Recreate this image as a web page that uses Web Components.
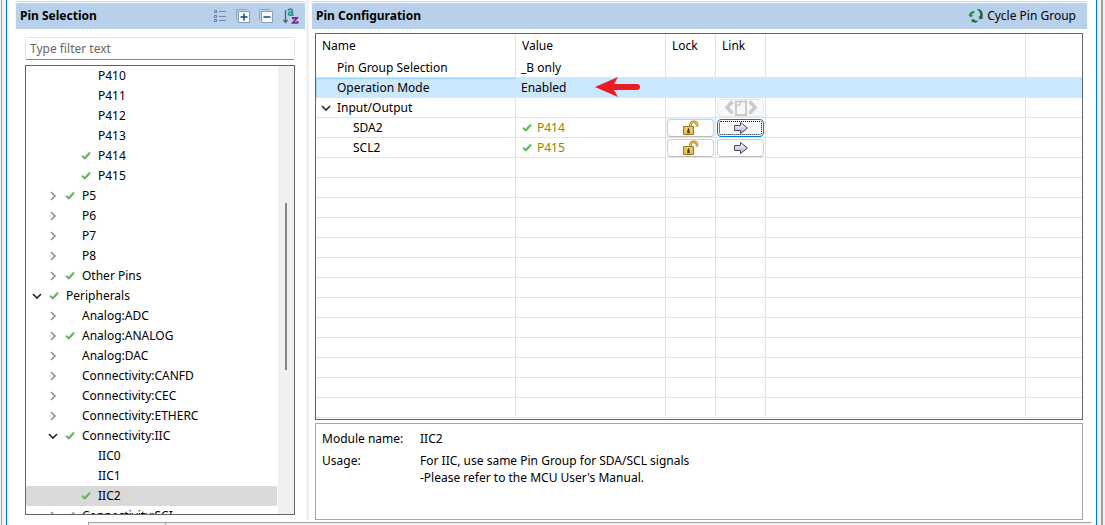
<!DOCTYPE html>
<html lang="en">
<head>
<meta charset="utf-8">
<title>Pin Configuration</title>
<style>
  html, body { height: 100%; margin: 0; }
  body {
    font: 12px/20px "Noto Sans", "Open Sans", sans-serif;
    color: #000;
    background: #f0f0f0;
    --section: #b9d0ea;
    --grid: #e3e3e3;
  }
</style>
</head>
<body>
<app-frame>
  <section-pane slot="left" heading="Pin Selection">
    <tool-bar slot="tools"></tool-bar>
    <pin-tree></pin-tree>
  </section-pane>
  <section-pane slot="right" heading="Pin Configuration">
    <cycle-button slot="tools"></cycle-button>
    <config-view></config-view>
  </section-pane>
</app-frame>

<script>
const ICONS = {
  tick: `<svg width="12" height="12" viewBox="0 0 12 12"><path d="M1.5 6.3 2.800 5.300 4.600 6.800 9.200 2 10.500 2.900 5 9.300Z" fill="#6cbb68" stroke="#8ccb87" stroke-width=".6"/><path d="M2.200 6.900 4.900 9 10.300 3.300" fill="none" stroke="#4b9f4d" stroke-width=".8"/></svg>`,
  closed: `<svg width="10" height="10" viewBox="0 0 10 10"><path d="M3 1 7 5 3 9" fill="none" stroke="#8b8b8b" stroke-width="1.5"/></svg>`,
  open: `<svg width="10" height="10" viewBox="0 0 10 10"><path d="M1 3 5 7 9 3" fill="none" stroke="#2b2b2b" stroke-width="1.7"/></svg>`,
  list: `<svg width="14" height="14" viewBox="0 0 14 14"><g fill="#d7e4f4" stroke="#5a78ad"><path d="M1.5 1.5h2v2h-2zM1.5 6.5h2v2h-2zM1.5 10.5h2v2h-2z"/></g><path d="M6 2.5h7M6 7.5h7M6 11.5h7" stroke="#6f88b2"/></svg>`,
  plus: `<svg width="14" height="14" viewBox="0 0 14 14"><path d="M.5 11V.5H11" fill="none" stroke="#8aa7c7"/><path d="M2.5 2.5h11v11h-11z" fill="#f6faff" stroke="#8aa0b8"/><path d="M4.500 8h7M8 4.500v7" stroke="#174a80" stroke-width="1.500"/></svg>`,
  minus: `<svg width="14" height="14" viewBox="0 0 14 14"><path d="M.5 11V.5H11" fill="none" stroke="#8aa7c7"/><path d="M2.5 2.5h11v11h-11z" fill="#f6faff" stroke="#8aa0b8"/><path d="M4.500 8h7" stroke="#174a80" stroke-width="1.500"/></svg>`,
  sort: `<svg width="17" height="18" viewBox="0 0 17 18"><path d="M3.500 3v12M1.500 13 3.500 15.500 5.500 13" fill="none" stroke="#56606e" stroke-width="1.300"/><path d="M6.200 3.600Q6.700 2.200 8.300 2.200 10.300 2.200 10.300 4V8H12M10.300 5Q6.500 4.800 6.500 6.800 6.700 8.200 8.200 8.100 9.800 8 10.300 6.800" fill="none" stroke="#2c8f83" stroke-width="1.700"/><path d="M10.800 12.300V10.800H15L10.800 15.800H15.500V14" fill="none" stroke="#8a1f91" stroke-width="1.800"/></svg>`,
  cycle: `<svg width="16" height="16" viewBox="0 0 16 16"><path d="M1 7C1.500 4 4 2.500 7 3.500L5.600 5.500C4.500 5.300 3.700 6 3.600 7L5.400 7 2.800 9.500.3 7Z" fill="#2d8b3b"/><path d="M9 1.300 10.500 1C14.300 2.200 15.700 6 14.300 9.300L15.600 10 11.500 11.500 10.500 7.900 12 8.400C12.900 5.500 11.500 3 9 1.300Z" fill="#176b2b"/><path d="M10 12.500C9 14.800 6.500 15.300 4.800 13.600L3.900 14.800 3.600 11.500 7 11.200 6.300 12.200C7.500 13.200 8.600 12.700 10 12.500Z" fill="#105c22"/></svg>`,
  lock: `<svg width="16" height="16" viewBox="0 0 16 16"><path d="M7.500 8V4.500A3.300 3.300 0 0 1 14 4.500V6.500" fill="none" stroke="#a47a16" stroke-width="2.600"/><path d="M7.500 8V4.500A3.300 3.300 0 0 1 14 4.500V6" fill="none" stroke="#f1cf65" stroke-width="1.100"/><path d="M.5 6.500h10v8h-10z" fill="#ddb547" stroke="#a67c18"/><path d="M1.500 8h8M1.500 10h8M1.500 12h8" stroke="#f7df8d"/><path d="M5 8.500h1v2h.5v2.500H4.500v-2.500H5z" fill="#4d3a0c" stroke="#4d3a0c" stroke-width=".4"/></svg>`,
  arrow: `<svg width="16" height="16" viewBox="0 0 16 16"><defs><linearGradient id="g" x2="0" y2="1"><stop stop-color="#fff"/><stop offset="1" stop-color="#a9abda"/></linearGradient></defs><path d="M1.500 5.500H7.500V2.500L14.500 8 7.500 13.500V10.500H1.500Z" fill="url(#g)" stroke="#4b4b60"/></svg>`,
  group: `<svg width="34" height="16" viewBox="0 0 34 16"><g fill="none" stroke="#cbcbcb"><path d="M8.500 1.500 3 7.500 8.500 13.500M25.500 1.500 31 7.500 25.500 13.500" stroke-width="3.500"/><path d="M12 1.500h10v13.500h-10z" stroke-width="2"/><path d="M13 5h3V2" stroke-width="1.500"/></g></svg>`,
  pointer: `<svg width="46" height="22" viewBox="0 0 46 22"><path d="M0 11 23 1 19 8H42Q45 8 45 11T42 14H19L23 21Z" fill="#ed1c24"/></svg>`
};
const RESET = `*{box-sizing:border-box}svg{display:block}button{font:inherit;color:inherit;margin:0;padding:0;border:0;background:none}`;

function define(name, css, html) {
  customElements.define(name, class extends HTMLElement {
    constructor() {
      super();
      this.attachShadow({ mode: 'open' });
      const t = document.createElement('template');
      t.innerHTML = `<style>${RESET}${css}</style>` + (typeof html === 'function' ? html(this) : html);
      this.shadowRoot.append(t.content);
    }
  });
}

define('ui-icon', `:host{display:inline-flex;align-items:center;justify-content:center;flex:none}`,
  el => ICONS[el.getAttribute('name')] || '');

define('app-frame', `
  :host{display:flex;height:100vh;padding:0 2px 0 1px}
  .window{flex:1;min-width:0;display:flex;flex-direction:column;background:#fff;border:solid #0078d7;border-width:0 1px}
  .edge{flex:none;width:5px;border-left:1px solid #a0a0a0;background:#f0f0f0}
  .edge.far{width:6px;border-left:0;border-right:2px solid #a0a0a0}
  .panes{flex:1;min-height:0;display:grid;grid-template-columns:299px 3px minmax(0,1fr)}
  .left{padding:2px 0 0 8px;min-height:0;display:grid}
  .right{padding:2px 8px 0 2px;min-height:0;display:grid}
  .sash{background:#f0f0f0}
  .tabs{display:flex;height:3px;margin:2px 5px 0 81px;border:solid #a0a0a0;border-width:1px 0 0 1px;background:#f0f0f0}
  .tab{width:77px;border-right:1px solid #a0a0a0}`,
  `<div class="edge"></div>
   <div class="window">
     <main class="panes"><div class="left"><slot name="left"></slot></div><div class="sash"></div><div class="right"><slot name="right"></slot></div></main>
     <div class="tabs"><div class="tab"></div></div>
   </div>
   <div class="edge far"></div>`);

define('section-pane', `
  :host{display:flex;flex-direction:column;min-width:0;min-height:0}
  header{display:flex;align-items:center;justify-content:space-between;height:27px;padding:0 5px 1px 4px;
    background:var(--section);border:1px solid #f5f9fd;border-bottom:0;border-radius:3px 3px 0 0;box-shadow:0 -1px 0 #c5daef}
  h2{margin:0;font-size:12px;line-height:20px;font-weight:700}
  .body{flex:1;min-height:0;display:grid}`,
  el => `<header><h2>${el.getAttribute('heading')}</h2><slot name="tools"></slot></header><div class="body"><slot></slot></div>`);

define('tool-bar', `
  :host{display:flex;gap:9px;align-items:center;padding-right:1px}
  button{display:grid;place-items:center;height:18px}`,
  `<button aria-label="Show as list"><ui-icon name="list"></ui-icon></button>
   <button aria-label="Expand all"><ui-icon name="plus"></ui-icon></button>
   <button aria-label="Collapse all"><ui-icon name="minus"></ui-icon></button>
   <button aria-label="Sort alphabetically"><ui-icon name="sort"></ui-icon></button>`);

define('cycle-button', `:host{display:block;padding-right:6px}button{display:flex;align-items:center;gap:3px}`,
  `<button><ui-icon name="cycle"></ui-icon>Cycle Pin Group</button>`);

define('tree-item', `
  :host{display:flex;align-items:center;height:20px;padding-left:2px;white-space:nowrap}
  :host([level="2"]){padding-left:18px}
  :host([level="3"]){padding-left:34px}
  :host([aria-selected="true"]){background:#d9d9d9;border-radius:2px}
  .twist{width:18px}.state{width:16px;margin-right:4px}
  .label{height:20px;line-height:20px}`,
  el => `<ui-icon class="twist" name="${el.getAttribute('twist') || ''}"></ui-icon>
    <ui-icon class="state" name="${el.hasAttribute('ok') ? 'tick' : ''}"></ui-icon><span class="label"><slot></slot></span>`);

const TREE = [
  [3,'','','P410'],[3,'','','P411'],[3,'','','P412'],[3,'','','P413'],[3,'','ok','P414'],[3,'','ok','P415'],
  [2,'closed','ok','P5'],[2,'closed','','P6'],[2,'closed','','P7'],[2,'closed','','P8'],[2,'closed','ok','Other Pins'],
  [1,'open','ok','Peripherals'],[2,'closed','','Analog:ADC'],[2,'closed','ok','Analog:ANALOG'],[2,'closed','','Analog:DAC'],
  [2,'closed','','Connectivity:CANFD'],[2,'closed','','Connectivity:CEC'],[2,'closed','','Connectivity:ETHERC'],
  [2,'open','ok','Connectivity:IIC'],[3,'','','IIC0'],[3,'','','IIC1'],[3,'','ok','IIC2'],[2,'closed','ok','Connectivity:SCI']
];
define('pin-tree', `
  :host{display:flex;flex-direction:column;gap:5px;min-height:0;padding:8px 11px 5px 10px}
  input{width:100%;height:23px;padding:0 4px;font:inherit;background:#fff;border:1px solid #e3e3e3;border-bottom-color:#868686;border-radius:2px;outline:0}
  input::placeholder{color:#666;opacity:1}
  .box{flex:1;min-height:0;display:flex;border:1px solid #646464;background:#fff;overflow:hidden}
  .rows{flex:1;min-width:0;overflow:hidden}
  .track{width:16px;margin-left:1px;display:flex;flex-direction:column;align-items:center;background:#f0f0f0}
  .above{flex:137}.thumb{flex:167;width:2px;background:#868686}.below{flex:144}`,
  `<input type="text" aria-label="Filter pins" placeholder="Type filter text">
   <div class="box"><div class="rows" role="tree">${TREE.map(([level, twist, ok, text]) =>
     `<tree-item role="treeitem" level="${level}" twist="${twist}" ${ok} ${text === 'IIC2' ? 'aria-selected="true"' : ''}>${text}</tree-item>`).join('')}</div>
   <div class="track"><div class="above"></div><div class="thumb"></div><div class="below"></div></div></div>`);

define('cell-button', `
  :host{display:block}
  button{display:grid;place-items:center;width:100%;height:18px;background:#fdfdfd;border:1px solid #d0d0d0;border-bottom-color:#bcbcbc;border-radius:4px}
  :host([active]) button{border-color:#0078d7;outline:1px dotted #000;outline-offset:-3px}
  button:disabled{background:#f9f9f9;border-color:#e8e8e8}`,
  el => `<button aria-label="${el.getAttribute('label')}" ${el.hasAttribute('off') ? 'disabled' : ''}><ui-icon name="${el.getAttribute('icon')}"></ui-icon></button>`);

const pinRow = (name, pin, active) => `<tr><td class="child">${name}</td>
  <td><span class="pin"><ui-icon name="tick"></ui-icon>${pin}</span></td>
  <td class="act ${active ? 'hot' : ''}"><cell-button icon="lock" label="Lock ${name}"></cell-button></td>
  <td class="act"><cell-button icon="arrow" label="Go to ${pin}" ${active ? 'active' : ''}></cell-button></td><td></td><td></td></tr>`;
const emptyRow = '<tr>' + '<td></td>'.repeat(6) + '</tr>';

define('config-table', `
  :host{display:block;min-height:0;overflow:hidden;border:1px solid #646464;background:#fff}
  table{width:100%;table-layout:fixed;border-collapse:separate;border-spacing:0}
  .name{width:200px}.value{width:150px}.tiny{width:50px}.spare{width:260px}
  th,td{height:20px;padding:0 5px;line-height:19px;text-align:left;font-weight:400;white-space:nowrap;border-right:1px solid var(--grid);border-bottom:1px solid var(--grid)}
  th{height:24px;padding:0 6px 2px;border-bottom:0}
  th:last-child,td:last-child{border-right:0}
  td:first-child{padding-left:21px}
  td.child{padding-left:37px}
  td.parent{padding-left:5px}
  .twisty{display:flex;align-items:center;gap:6px}
  .pin{display:flex;align-items:center;gap:4px;color:#968400}
  td.act{padding:1px 1px 0}
  td.hot{background:#e5f3ff}
  .selected td{background:#cce8ff}
  .selected td:first-child{border-top:1px solid #99d1ff;border-left:1px solid #99d1ff;padding-left:20px;line-height:18px}
  .mark{position:relative}
  .mark ui-icon{position:absolute;left:79px;top:-2px;z-index:1}`,
  `<table>
    <colgroup><col class="name"><col class="value"><col class="tiny"><col class="tiny"><col class="spare"><col></colgroup>
    <thead><tr><th>Name</th><th>Value</th><th>Lock</th><th>Link</th><th></th><th></th></tr></thead>
    <tbody>
      <tr><td>Pin Group Selection</td><td>_B only</td><td></td><td></td><td></td><td></td></tr>
      <tr class="selected"><td>Operation Mode</td><td class="mark">Enabled<ui-icon name="pointer"></ui-icon></td><td></td><td></td><td></td><td></td></tr>
      <tr><td class="parent"><span class="twisty"><ui-icon name="open"></ui-icon>Input/Output</span></td><td></td><td></td>
        <td class="act"><cell-button icon="group" label="Link group" off></cell-button></td><td></td><td></td></tr>
      ${pinRow('SDA2', 'P414', true)}${pinRow('SCL2', 'P415', false)}
      ${emptyRow.repeat(13)}
    </tbody>
  </table>`);

define('module-details', `
  :host{display:block;border:1px solid #a5a5aa;background:#fff;overflow:hidden}
  dl{display:grid;grid-template-columns:98px minmax(0,1fr);row-gap:5px;margin:0;padding:6px;line-height:17px}
  dd{margin:0}`,
  `<dl><dt>Module name:</dt><dd>IIC2</dd><dt>Usage:</dt><dd>For IIC, use same Pin Group for SDA/SCL signals<br>-Please refer to the MCU User's Manual.</dd></dl>`);

define('config-view', `
  :host{display:grid;grid-template-rows:387px minmax(0,1fr);gap:3px;min-width:0;min-height:0;padding:4px 5px 0 4px}`,
  `<config-table></config-table><module-details></module-details>`);
</script>
</body>
</html>
